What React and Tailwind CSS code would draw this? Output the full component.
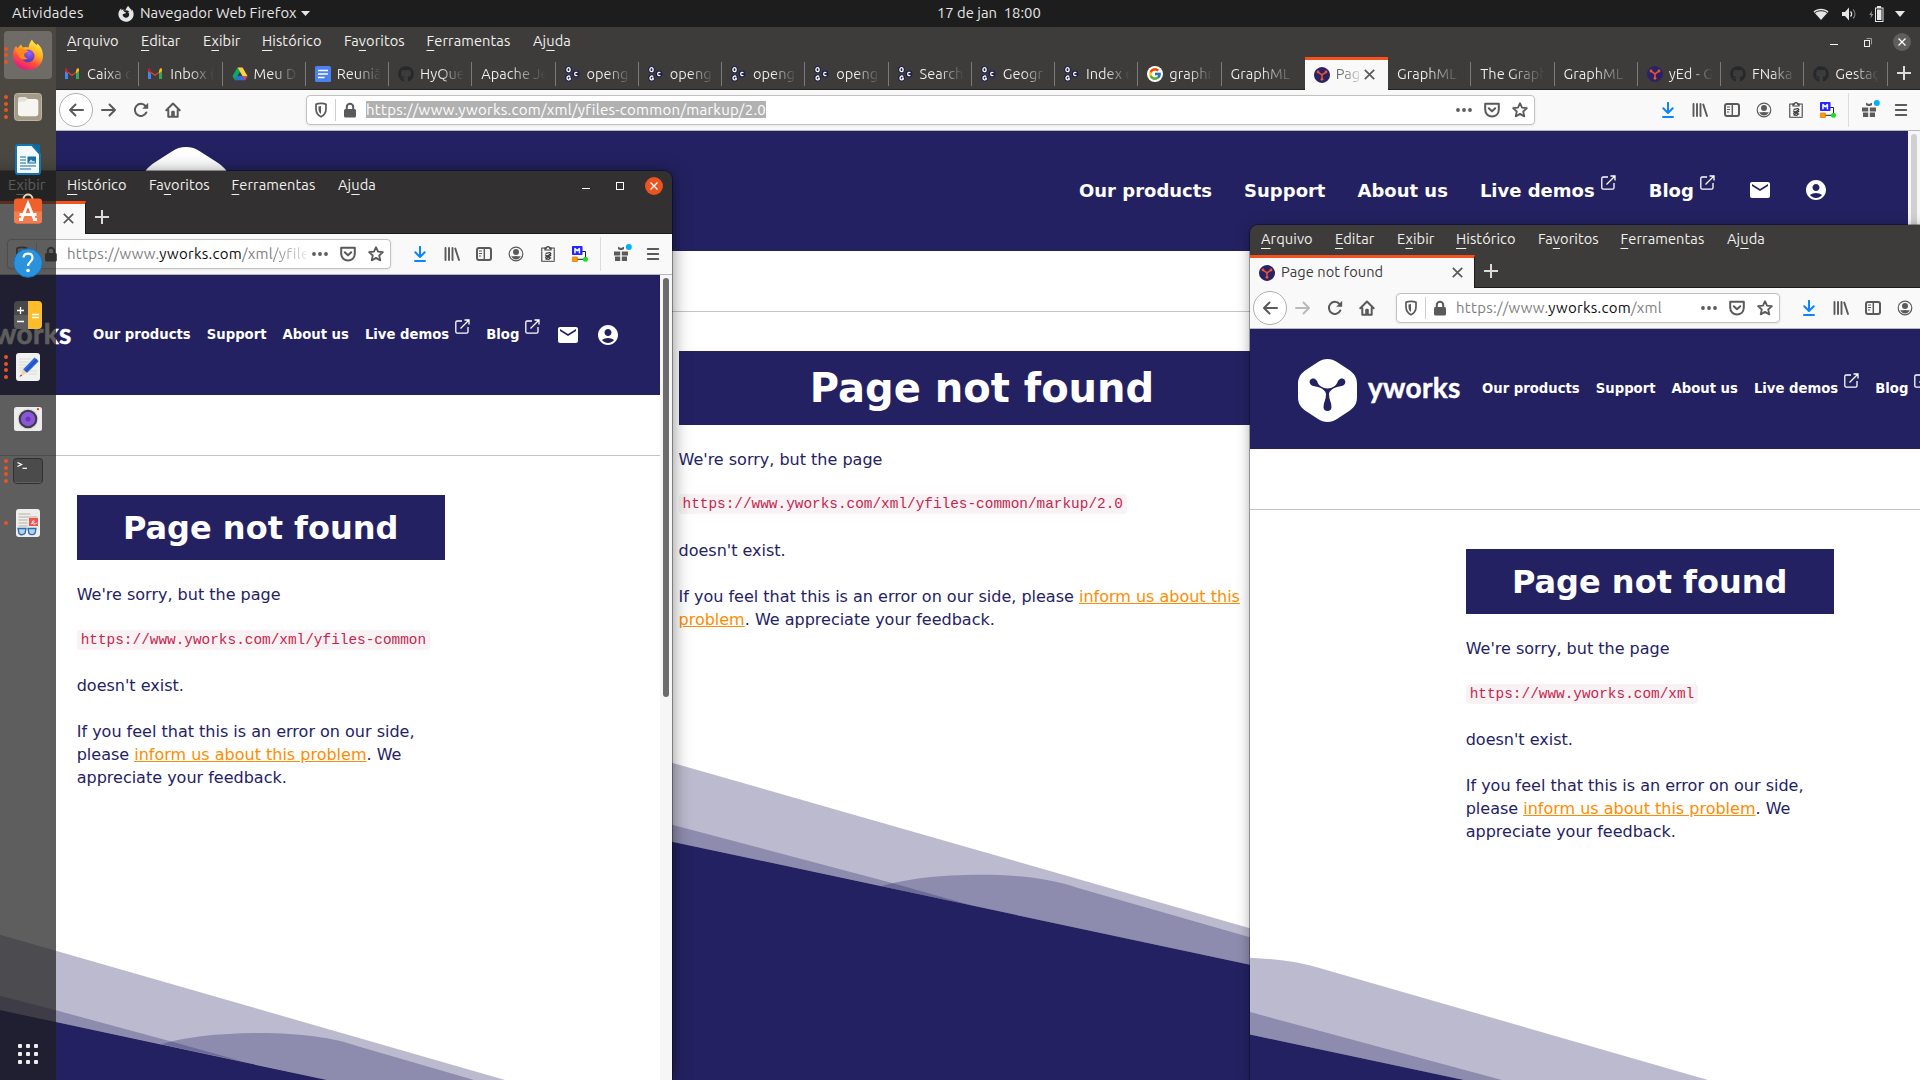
import React from "react";
import { FaGithub, FaFirefoxBrowser } from "react-icons/fa";
import { FcGoogle } from "react-icons/fc";
import { MdEmail, MdAccountCircle } from "react-icons/md";

const ui = "font-['Ubuntu','Noto_Sans',sans-serif]";

/* ---------- favicons ---------- */

function Gmail() {
  return (
    <svg width="16" height="16" viewBox="0 0 16 16" className="-ml-px">
      <path d="M1 3.500v9.500h3V7l4 3 4-3v6h3V3.500L8 8.600z" fill="#ea4335" />
      <path d="M1 5v8h3V7.200z" fill="#4285f4" />
      <path d="M15 5v8h-3V7.200z" fill="#34a853" />
      <path d="M12 4.700V7.200l3-2.200V3.600c0-1.100-1.200-1.600-2-1z" fill="#fbbc04" />
      <path d="M4 4.700V7.200L1 5V3.600c0-1.100 1.200-1.600 2-1z" fill="#c5221f" />
    </svg>
  );
}
function Drive() {
  return (
    <svg width="16" height="16" viewBox="0 0 16 16">
      <path d="M5.500 1.500L.5 10l2.400 4.200L8 5.700z" fill="#0da960" />
      <path d="M5.500 1.500h5L15.500 10h-5z" fill="#ffcf48" />
      <path d="M2.900 14.300L5.400 10h10.100l-2.500 4.300z" fill="#2d6fdd" />
      <path d="M10.600 10h4.900l-2.500 4.300z" fill="#ea4335" />
    </svg>
  );
}
function Docs() {
  return (
    <svg width="16" height="16" viewBox="0 0 16 16">
      <rect width="16" height="16" rx="1.500" fill="#4d80f0" />
      <path d="M3 4.500h10M3 8h10M3 11.500h6.500" stroke="#fff" strokeWidth="1.700" />
    </svg>
  );
}
function Ogc() {
  return (
    <svg width="16" height="16" viewBox="0 0 16 16" className="-ml-px">
      <g fill="#1d1f4d">
        <circle cx="4.500" cy="3.700" r="3.400" />
        <circle cx="4.500" cy="12" r="3.400" />
        <circle cx="12" cy="8" r="3.400" />
      </g>
      <g fill="none" stroke="#fff" strokeWidth="1.300">
        <ellipse cx="4.500" cy="3.700" rx="1.600" ry="2" />
        <path d="M6.200 10.600c-1-1-3.200-.8-3.200 1.400s2.300 2.300 3.200 1.400v-1.300h-1.400M13.400 6.900c-.9-.9-2.700-.6-2.700 1.100s1.800 2 2.700 1.100" />
      </g>
    </svg>
  );
}
function GoogleIcon() {
  return (
    <span className="flex size-4 items-center justify-center rounded-full bg-white">
      <FcGoogle size={14} />
    </span>
  );
}
function YTab() {
  return (
    <svg width="16" height="16" viewBox="0 0 16 16" className="shrink-0">
      <path d="M8 0c3 0 8 2.800 8 8s-5 8-8 8-8-2.800-8-8 5-8 8-8z" fill="#2a2266" />
      <path d="M4 5.200L8 7.800l4-2.600M8 7.800V13" stroke="#f0542a" strokeWidth="1.500" fill="none" />
      <circle cx="4" cy="5" r="1.400" fill="#f0542a" />
      <circle cx="12" cy="5" r="1.400" fill="#f0542a" />
      <circle cx="8" cy="12.300" r="1.400" fill="#f0542a" />
    </svg>
  );
}
function Hub() {
  return <FaGithub size={16} color="#24292e" />;
}

/* ---------- browser chrome icons ---------- */

function Ico({ children, size = 16, color = "#5a5a5b", className = "" }) {
  return (
    <svg
      width={size}
      height={size}
      viewBox="0 0 16 16"
      fill="none"
      stroke={color}
      strokeWidth="2"
      strokeLinecap="round"
      strokeLinejoin="round"
      className={"shrink-0 " + className}
    >
      {children}
    </svg>
  );
}
const Back = () => (
  <Ico><path d="M15 8H2M7.500 2.500L2 8l5.500 5.500" /></Ico>
);
const Forward = ({ color }) => (
  <Ico color={color}><path d="M1 8h13M8.500 2.500L14 8l-5.500 5.500" /></Ico>
);
const Reload = () => (
  <Ico>
    <path d="M13.300 10.500A6 6 0 1 1 12.500 4" />
    <path d="M15.200.8v6H9.200z" fill="#5a5a5b" stroke="none" />
  </Ico>
);
const Home = () => (
  <Ico>
    <path d="M1.300 8.300L8 1.500l6.700 6.800M3.300 8v6.700h9.400V8" />
    <path d="M6.200 15V10.200c0-1 .6-1.400 1.800-1.400s1.800.4 1.800 1.400V15z" fill="#5a5a5b" stroke="none" />
  </Ico>
);
const Shield = () => (
  <Ico>
    <path d="M8 1.300c2 0 4 .4 5 1v4.500c0 4-2 6.500-5 8-3-1.500-5-4-5-8V2.300c1-.6 3-1 5-1z" strokeWidth="1.700" />
    <path d="M8 4v8C6.300 10.800 5.500 9 5.500 6.900V4.500z" fill="#5a5a5b" stroke="none" />
  </Ico>
);
const Lock = () => (
  <Ico>
    <rect x="2" y="7" width="12" height="8.500" rx="1.500" fill="#5a5a5b" stroke="none" />
    <path d="M4.800 7.500V5a3.200 3.200 0 0 1 6.400 0v2.500" />
  </Ico>
);
const Dots = () => (
  <Ico>
    <g fill="#5a5a5b" stroke="none">
      <circle cx="2" cy="8" r="1.900" />
      <circle cx="8" cy="8" r="1.900" />
      <circle cx="14" cy="8" r="1.900" />
    </g>
  </Ico>
);
const Pocket = () => (
  <Ico>
    <path d="M1.200 1.800h13.600v5.700c0 9.200-13.600 9.200-13.600 0z" />
    <path d="M4.800 6.300L8 9.300l3.200-3" />
  </Ico>
);
const Star = () => (
  <Ico>
    <path d="M8 1.200l2 4.500 4.900.5-3.700 3.300 1.100 4.900L8 11.900l-4.300 2.500 1.100-4.900L1.100 6.200 6 5.700z" strokeWidth="1.800" />
  </Ico>
);
const Download = () => (
  <Ico color="#0a84ff">
    <path d="M8 .8v9.700M3.300 6.300L8 11l4.700-4.700M3 15h10" />
  </Ico>
);
const Library = () => (
  <Ico>
    <path d="M1.500 2v12M5 2v12M8.500 2v12M11.300 2.600l3.700 11.400" strokeWidth="1.900" />
  </Ico>
);
const Sidebar = () => (
  <Ico>
    <rect x="1" y="2" width="14" height="12" rx="2" />
    <path d="M8.300 2v12" strokeWidth="1.500" />
    <path d="M3.300 5h2.400M3.300 7.500h2.400M3.300 10h1.500" strokeWidth="1" />
  </Ico>
);
const Account = () => (
  <Ico>
    <circle cx="8" cy="8" r="6.800" strokeWidth="1.200" />
    <circle cx="8" cy="6" r="3" fill="#5a5a5b" stroke="none" />
    <path d="M3.200 9.800c1.200 1 3 .2 4.800.2s3.600.8 4.800-.2c-.6 2.300-2.600 3.700-4.800 3.700s-4.200-1.400-4.800-3.700z" fill="#5a5a5b" stroke="none" />
  </Ico>
);
const Clipboard = () => (
  <Ico color="#3a3a3b">
    <rect x="1.800" y="2" width="12.400" height="13.300" strokeWidth="1.100" strokeDasharray="1.500 .8" />
    <path d="M5 4h6V2.200H9.500a1.500 1.500 0 0 0-3 0H5z" strokeWidth="1.200" fill="#fff" />
    <path d="M6 7.300l4-.8.800 1.200-5.300 3.600M10.800 9.300l-5 3.700 3 .3 2-1.500M5.500 9l3.800 2.600" strokeWidth="1.200" />
  </Ico>
);
const MarkIcon = () => (
  <Ico className="overflow-visible">
    <rect x="0" y="0" width="10.500" height="9" rx=".8" fill="#2424ff" stroke="none" />
    <path d="M3 6.800V2.600l2.200 2.200 2.200-2.200v4.200" stroke="#fff" strokeWidth="1.500" />
    <path d="M10.500 5.500h3v7.500M4 13.300h9" stroke="#222" strokeWidth="1" />
    <rect x=".8" y="11" width="4.500" height="4.500" fill="#ff9a00" stroke="#e07800" strokeWidth=".8" />
    <circle cx="13.500" cy="13.300" r="2.500" fill="#17e31b" stroke="none" />
  </Ico>
);
const Gift = () => (
  <Ico className="overflow-visible">
    <g fill="#5a5a5b" stroke="none">
      <path d="M1 5.500h6.200v4H1zM8.800 5.500H15v4H8.800zM2 10.500h5.200V15H2zM8.800 10.500H14V15H8.800z" />
      <path d="M5 .8l3 1.200 3-1.200v2.500L8 4.200 5 3.300z" />
    </g>
    <circle cx="15.800" cy="1" r="3" fill="#00b3f4" stroke="none" />
  </Ico>
);
const Burger = () => (
  <Ico><path d="M2.800 3h10.400M2.800 8h10.400M2.800 13h10.400" /></Ico>
);
const Plus = () => (
  <svg width="14" height="14" viewBox="0 0 14 14" className="shrink-0">
    <path d="M7 0v14M0 7h14" stroke="#dcdcdc" strokeWidth="2" />
  </svg>
);
const TabClose = () => (
  <svg width="11" height="11" viewBox="0 0 11 11" className="-mt-0.5 shrink-0">
    <path d="M.8.8l9.400 9.400M10.200.8L.8 10.200" stroke="#5a5a5a" strokeWidth="1.700" />
  </svg>
);
const External = () => (
  <svg width="15" height="15" viewBox="0 0 15 15" fill="none" stroke="#fff" strokeWidth="1.300" className="shrink-0 -translate-y-[8px]">
    <path d="M7 2H2.200C1.400 2 .8 2.600.8 3.400v9.400c0 .8.6 1.400 1.400 1.400h9.400c.8 0 1.400-.6 1.400-1.400V8M5.500 9.500L14 1M9.500 1H14v4.500" />
  </svg>
);

const Cell = ({ children, w = "w-8" }) => (
  <span className={"flex shrink-0 items-center justify-center " + w}>{children}</span>
);

/* ---------- window chrome ---------- */

const menus = [
  ["", "A", "rquivo", "w-[74px]"],
  ["", "E", "ditar", "w-[62px]"],
  ["E", "x", "ibir", "w-[59px]"],
  ["", "H", "istórico", "w-[82px]"],
  ["Fa", "v", "oritos", "w-[82.500px]"],
  ["", "F", "erramentas", "w-[106.500px]"],
  ["Aj", "u", "da", "w-[60px]"],
];

function MenuBar({ controls, dark }) {
  return (
    <div className={"flex h-[30px] shrink-0 items-center pl-[11px] text-[14.600px] tracking-[0.100px] text-[#f0f0ee] " + ui}>
      {menus.map(([a, u, b, w]) => (
        <span key={u + b} className={"-mt-0.5 shrink-0 whitespace-nowrap " + w}>
          {a}
          <span className="underline decoration-1 underline-offset-4">{u}</span>
          {b}
        </span>
      ))}
      {controls && (
        <span className="ml-auto flex items-center pr-[9px]">
          <span className="mt-1 h-px w-2 bg-white" />
          <span className="ml-[22px] flex h-[14px] w-[16px] items-center justify-center">
            {dark ? (
              <span className="size-2 border border-white" />
            ) : (
              <svg width="8" height="9" viewBox="0 0 8 9" fill="none" stroke="#eee">
                <rect x=".5" y="2.500" width="5" height="6" />
                <path d="M2.500.5h5v6" stroke="#999" />
              </svg>
            )}
          </span>
          <span className={"ml-[17px] flex size-[18px] items-center justify-center rounded-full " + (dark ? "bg-[#e95420]" : "bg-[#5f5e5c]")}>
            <svg width="8" height="8" viewBox="0 0 8 8" stroke="#fff" strokeWidth="1.300">
              <path d="M.5.5l7 7M7.500.5l-7 7" />
            </svg>
          </span>
        </span>
      )}
    </div>
  );
}

const tabs = [
  [Gmail, "Caixa d"],
  [Gmail, "Inbox ("],
  [Drive, "Meu D"],
  [Docs, "Reuniã"],
  [Hub, "HyQue"],
  [null, "Apache Je"],
  [Ogc, "openg"],
  [Ogc, "openg"],
  [Ogc, "openg"],
  [Ogc, "openg"],
  [Ogc, "Search"],
  [Ogc, "Geogr"],
  [Ogc, "Index o"],
  [GoogleIcon, "graphn"],
  [null, "GraphML"],
  [YTab, "Pag", true],
  [null, "GraphML"],
  [null, "The Graph"],
  [null, "GraphML"],
  [YTab, "yEd - G"],
  [Hub, "FNaka"],
  [Hub, "Gestaç"],
];

function Tab({ Icon, label, active, last }) {
  if (active)
    return (
      <div className="flex h-[33px] w-[83.250px] shrink-0 items-center border-t-[3px] border-[#f4511e] bg-[#f9f9fa] pl-[9px]">
        <Icon />
        <span className="-mt-0.5 ml-[6px] w-[28px] overflow-hidden whitespace-nowrap bg-linear-to-r from-[#666] from-20% to-[#e4e4e4] to-90% bg-clip-text text-transparent">{label}</span>
        <TabClose />
      </div>
    );
  return (
    <div className="flex h-[33px] w-[83.250px] shrink-0 items-center pl-[9px] text-[#f0f0ee]">
      {Icon && <span className="w-[22px] shrink-0"><Icon /></span>}
      <span className={(Icon ? "w-[44px]" : "w-[65px]") + " overflow-hidden whitespace-nowrap bg-linear-to-r from-[#f0f0ee] from-45% to-[#3e3c3a] bg-clip-text text-transparent"}>
        {label}
      </span>
      {!last && <span className="mt-px ml-auto h-6 w-px bg-[#7c7b79]" />}
    </div>
  );
}

function MainTabs() {
  return (
    <div className={"flex h-[33px] shrink-0 border-b border-[#242322] text-[14.600px] " + ui}>
      {tabs.map(([Icon, label, active], i) => (
        <Tab key={i} Icon={Icon} label={label} active={active} last={i === 14} />
      ))}
      <span className="flex w-[32px] items-center justify-center"><Plus /></span>
    </div>
  );
}
function SingleTab() {
  return (
    <div className={"flex h-[33px] shrink-0 border-b border-[#1c1b1b] text-[14.600px] tracking-[0.080px] " + ui}>
      <div className="-mb-px flex w-[225px] items-center border-t-[3px] border-r border-t-[#f4511e] border-r-[#1c1b1b] bg-[#f9f9fa] pl-[9px] text-[#3b3b3c]">
        <YTab />
        <span className="-mt-0.5 grow pl-[6px]">Page not found</span>
        <span className="mr-[11.500px] flex"><TabClose /></span>
      </div>
      <span className="flex w-[32px] items-center justify-center"><Plus /></span>
    </div>
  );
}

function Toolbar({ main, url }) {
  return (
    <div className={"flex h-[41px] shrink-0 items-center border-b border-[#b8b8b9] bg-[#f9f9fa] px-[3px] " + ui}>
      <span className="flex size-[34px] shrink-0 items-center justify-center rounded-full border border-[#b0b0b1] bg-white"><Back /></span>
      <Cell><Forward color={main ? "#5a5a5b" : "#b9b9ba"} /></Cell>
      <Cell><Reload /></Cell>
      <Cell><Home /></Cell>
      <div className={"flex h-[30px] min-w-0 grow items-center rounded-[4px] border border-[#c1c1c2] bg-white shadow-[0_1px_3px_rgba(0,0,0,0.08)] " + (main ? "mr-[117.500px] ml-[117px]" : "mr-[13.500px] ml-[13px]")}>
        <Cell w="w-[28px]"><Shield /></Cell>
        <span className="h-[22px] w-px shrink-0 bg-[#cfcfd0]" />
        <Cell w="w-[27px]"><Lock /></Cell>
        <span className="mt-px ml-[3px] min-w-0 grow overflow-hidden text-[15px] tracking-[0.270px] whitespace-nowrap">
          {main ? (
            <span className="bg-[#b1b1b1] text-white">{url.host[0] + url.host[1] + url.path}</span>
          ) : (
            <span className="text-[#808080]">
              {url.host[0]}
              <span className="text-[#0c0c0d]">{url.host[1]}</span>
              {url.fade ? (
                <>
                  /xml<span className="bg-linear-to-r from-[#808080] to-white to-[40px] bg-clip-text text-transparent">{url.fade}</span>
                </>
              ) : (
                url.path
              )}
            </span>
          )}
        </span>
        <Cell w="w-[28px]"><Dots /></Cell>
        <Cell w="w-[28px]"><Pocket /></Cell>
        <Cell w="w-[28px]"><Star /></Cell>
      </div>
      <Cell><Download /></Cell>
      <Cell><Library /></Cell>
      <Cell><Sidebar /></Cell>
      <Cell><Account /></Cell>
      <Cell><Clipboard /></Cell>
      <Cell><MarkIcon /></Cell>
      <span className="mx-1 h-[34px] w-px shrink-0 bg-[#dcdcdd]" />
      <Cell><Gift /></Cell>
      <Cell><Burger /></Cell>
    </div>
  );
}

/* ---------- web page ---------- */

function YLogo({ className }) {
  return (
    <svg viewBox="0 0 59 63" preserveAspectRatio="none" className={className}>
      <path d="M29.500 0C33 0 36 1 39 3L50 10.200C56.500 14.500 59 18.500 59 25v13c0 6.500-2.500 10.500-9 14.800L39 60c-3 2-6 3-9.500 3s-6.500-1-9.500-3L9 52.800C2.500 48.500 0 44.500 0 38V25c0-6.500 2.500-10.500 9-14.800L20 3c3-2 6-3 9.500-3z" fill="#fff" />
      <path d="M12 24.500c-1.500-3.500 2-6 5-4.500 3 1.500 2 5 6 7.500 2 1.300 4 2 6.500 2s4.500-.7 6.500-2c4-2.500 3-6 6-7.500s6.500 1 5 4.500c-1.500 3.300-5 2.500-8 3.500-3.500 1.200-8 3.500-8 7.500 0 5 2.500 8 2.500 12.500 0 2.500-1.700 4-4 4s-4-1.500-4-4c0-4.500 2.500-7.500 2.500-12.500 0-4-4.500-6.300-8-7.500-3-1-6.500-.2-8-3.500z" fill="#242162" />
    </svg>
  );
}

function SiteHeader({ main }) {
  const gap = main ? "gap-8" : "gap-4";
  return (
    <div className="flex h-[120px] shrink-0 items-center bg-[#242162] pl-12 font-['DejaVu_Sans',sans-serif] font-bold text-white">
      {main ? (
        <YLogo className="mt-1 ml-[38px] h-[92px] w-[88px] shrink-0" />
      ) : (
        <>
          <YLogo className="mt-0.5 h-[63px] w-[59px] shrink-0" />
          <span className="-mt-1 ml-[11px] w-[92px] shrink-0 font-['Lato',sans-serif] text-[28px] leading-none tracking-[0.300px] [-webkit-text-stroke:0.500px_white]">yworks</span>
        </>
      )}
      <div className={"flex shrink-0 items-center whitespace-nowrap " + gap + (main ? " -mt-0.5 ml-[849px] text-[18px]" : " ml-[22px] text-[13.220px]")}>
        <span>Our products</span>
        <span>Support</span>
        <span>About us</span>
        <span className="flex items-center"><span className="mr-[6px]">Live demos</span><External /></span>
        <span className={"flex items-center " + (main ? "ml-px" : "")}><span className="mr-[6px]">Blog</span><External /></span>
        <span className={main ? "ml-px" : ""}><MdEmail size={24} /></span>
        <span><MdAccountCircle size={24} /></span>
      </div>
    </div>
  );
}

function NotFound({ main, url }) {
  return (
    <div className={"font-['DejaVu_Sans',sans-serif] text-[16px] leading-[22.860px] text-[#242265] " + (main ? "ml-[622.500px] w-[607px]" : "ml-[215.700px] w-[368px]")}>
      <h1 className={"mt-[39px] flex items-center justify-center bg-[#242162] font-bold text-white " + (main ? "h-[74px] text-[40px]" : "h-[65px] pt-0.5 text-[32px]")}>
        Page not found
      </h1>
      <p className="mt-[23.800px]">We're sorry, but the page</p>
      <p className={main ? "mt-[20px]" : "mt-[20.900px]"}>
        <code className="rounded bg-[#f9f2f4] px-1 py-0.5 font-['Liberation_Mono',monospace] text-[14.400px] whitespace-nowrap text-[#c7254e]">{url}</code>
      </p>
      <p className={main ? "mt-[24.800px]" : "mt-[23.900px]"}>doesn't exist.</p>
      <p className="mt-[22.860px] whitespace-nowrap">
        {main ? (
          <>
            If you feel that this is an error on our side, please <span className="text-[#ff8c00] underline">inform us about this<br />problem</span>. We appreciate your feedback.
          </>
        ) : (
          <>
            If you feel that this is an error on our side,<br />
            please <span className="text-[#ff8c00] underline">inform us about this problem</span>. We<br />
            appreciate your feedback.
          </>
        )}
      </p>
    </div>
  );
}

function Browser({ main, dark, controls, url, thumb, wave, className }) {
  return (
    <div className={"flex flex-col overflow-hidden " + (dark ? "bg-[#323030] " : "bg-[#3e3c3a] ") + className}>
      <MenuBar controls={controls} dark={dark} />
      {main ? <MainTabs /> : <SingleTab />}
      <Toolbar main={main} url={url} />
      <div className="flex min-h-0 grow bg-white">
        <div className="relative min-w-0 grow overflow-hidden">
          {wave}
          <div className="relative">
            <SiteHeader main={main} />
            <div className="h-[61px] border-b border-[#c4c4c4]" />
            <NotFound main={main} url={url.host.join("") + url.path} />
          </div>
        </div>
        <div className="w-3 shrink-0 bg-[#f6f6f7] pt-[3px]">
          <div className={"mx-auto w-1.5 rounded-full " + thumb} />
        </div>
      </div>
    </div>
  );
}

/* Wave footers are drawn in desktop coordinates, clipped to their window. */
function Wave({ box, className, light, mid, hump, navy }) {
  return (
    <svg viewBox={box} className={"absolute bottom-0 left-0 " + className}>
      <g fill="#242162">
        <path d={light} opacity=".31" />
        <path d={mid} opacity=".3" />
        {hump && <path d={hump} opacity=".3" />}
        <path d={navy} />
      </g>
    </svg>
  );
}

/* ---------- dock ---------- */

function DockItem({ dots = 0, active, children }) {
  return (
    <div className="relative flex h-[52px] w-14 items-center justify-center">
      {active && <span className="absolute inset-x-1 inset-y-0.5 rounded bg-white/20" />}
      <span className="absolute left-1 flex flex-col gap-[2.500px]">
        {Array.from({ length: dots }, (_, i) => (
          <span key={i} className="size-1 rounded-full bg-[#e95420]" />
        ))}
      </span>
      <svg width="32" height="32" viewBox="0 0 32 32" className="relative overflow-visible">{children}</svg>
    </div>
  );
}

function Dock() {
  return (
    <div className="absolute top-[27px] left-0 flex h-[1053px] w-14 flex-col bg-[rgba(30,30,30,0.717)] pt-0.5">
      <DockItem dots={3} active>
        <defs>
          <linearGradient id="fx" x1=".8" y1="0" x2=".3" y2="1">
            <stop offset="0" stopColor="#fff44f" />
            <stop offset=".4" stopColor="#ffb01e" />
            <stop offset=".7" stopColor="#ff4a3d" />
            <stop offset="1" stopColor="#e0158a" />
          </linearGradient>
          <radialGradient id="globe" cx=".6" cy=".3">
            <stop offset="0" stopColor="#a05cff" />
            <stop offset="1" stopColor="#5b3fc4" />
          </radialGradient>
        </defs>
        <path d="M20 .5c1 2.500 2.800 4 4.500 5.500l1-1.200C29.500 8 31 12.500 31 17c0 8-6.500 14-15 14S1 25 1 17c0-4 1-7.500 3-10l1.500 2.300L9 5.500l1.800 3C13 7.600 15 7.800 16.500 8.500 17 5 18.500 2.500 20 .5z" fill="url(#fx)" />
        <circle cx="16" cy="17" r="6.500" fill="url(#globe)" />
        <path d="M4 11c3-2.500 7-2 9 0 1.500 0 3 .5 3.500 1.500-1 1-3 1-4 2.500-1 1.500.5 4 3.500 4.500-3 2-7 1-9-2C5.500 15 5 13 4 11z" fill="#ff8a1c" />
      </DockItem>
      <DockItem dots={4}>
        <rect x="2.500" y="2.500" width="27" height="27" rx="3" fill="#a49a88" stroke="#bdb4a3" />
        <path d="M6 9c0-1.700.8-2.700 2.500-2.700h4.500c1.500 0 1.500 1.700 3.500 1.700h7c1.800 0 2.800 1 2.800 2.800v11.700c0 1.800-1 2.700-2.800 2.700h-14C7 25.200 6 24.200 6 22.500z" fill="#f7f5f2" />
        <path d="M6 9.500c0-2 .8-3.200 2.500-3.200h4.500c1.500 0 1.500 1.700 3.500 1.700-2 0-2 2.500-4 2.500H9c-2 0-3 .6-3 2z" fill="#e4dfd6" />
      </DockItem>
      <DockItem>
        <path d="M6 2h14l8 9v18a2 2 0 0 1-2 2H6a2 2 0 0 1-2-2V4a2 2 0 0 1 2-2z" fill="#f4f9fc" stroke="#0f77b3" strokeWidth="2" />
        <path d="M21 1.500h7V10z" fill="#0d6aa0" />
        <path d="M8 14h6M8 17h6M8 20h6M8 23h16M8 26h11" stroke="#0f6ea3" strokeWidth="1.200" />
        <rect x="15.500" y="13.500" width="8.500" height="7" fill="#1d6f9f" />
        <path d="M16.500 19.500l2.500-3 2 2 1-1 1.500 2z" fill="#bfe3f5" />
      </DockItem>
      <DockItem>
        <path d="M11.500 4c0-6 9-6 9 0" fill="none" stroke="#e3d5b2" strokeWidth="2" />
        <rect x="2" y="3.500" width="28" height="25" rx="3" fill="#f0602c" />
        <path d="M2 16.500h28v9a3 3 0 0 1-3 3H5a3 3 0 0 1-3-3z" fill="#f47d50" />
        <path d="M9.500 24.500L16 8.500l6.500 16M7.500 19.500h17M7 24.500h4M21 24.500h4" stroke="#fff" strokeWidth="2.800" fill="none" />
      </DockItem>
      <DockItem>
        <circle cx="16" cy="16" r="14.300" fill="#2b93dd" stroke="#1a6fb0" />
        <path d="M11.500 10.500c.5-5 9-5.500 9 .5 0 3.500-4.500 4-4.500 8" fill="none" stroke="#fff" strokeWidth="2.200" />
        <circle cx="16" cy="23.500" r="1.800" fill="#fff" />
      </DockItem>
      <DockItem>
        <rect x="2" y="2" width="28" height="28" rx="4" fill="#484848" />
        <path d="M2 16h14v14H6a4 4 0 0 1-4-4z" fill="#5c5c5c" />
        <path d="M16 2h10a4 4 0 0 1 4 4v20a4 4 0 0 1-4 4H16z" fill="#fdbc2c" />
        <path d="M5 11.500h7M8.500 8v7M5 22.500h7M20 15.500h7M20 18.500h7" stroke="#fff" strokeWidth="1.300" />
      </DockItem>
      <DockItem dots={4}>
        <rect x="4" y="2" width="24" height="28" rx="3" fill="#f1f1f0" />
        <path d="M7 8h12M7 11h9M7 14h7M7 17h6M17 23h8M7 20h5M18 20h7" stroke="#d4d4d2" strokeWidth=".8" />
        <path d="M11 18.500L22.500 6.500l4.200 3.800L15 22z" fill="#2f67dd" />
        <path d="M13.500 20.500l11.500-12" stroke="#1f4fb5" strokeWidth="1.500" />
        <path d="M11 18.500l4 3.500-7 3.500z" fill="#f3d2a8" />
        <path d="M9 23.500l1 1.200-2.500 1z" fill="#333" />
      </DockItem>
      <DockItem>
        <rect x="2" y="4" width="28" height="24" rx="2.500" fill="#ececec" />
        <circle cx="16" cy="16" r="10.500" fill="#dcdcdc" />
        <circle cx="16" cy="16" r="9.300" fill="#3b3b45" />
        <circle cx="16" cy="16" r="7.200" fill="#8a57d8" />
        <circle cx="16" cy="16" r="2.500" fill="#6c35b8" />
        <circle cx="26" cy="6.200" r="1.100" fill="#d9352b" />
      </DockItem>
      <DockItem dots={4}>
        <rect x="1.500" y="3.500" width="29" height="25" rx="3" fill="#4b4b4b" stroke="#2f2f2f" />
        <path d="M2.500 27.500h27" stroke="#666" strokeWidth=".8" />
        <path d="M5.500 7.500l4 2-4 2" stroke="#fff" strokeWidth="1.300" fill="none" />
        <path d="M10.500 13.300h4.500" stroke="#fff" strokeWidth="1.200" />
      </DockItem>
      <DockItem dots={1}>
        <rect x="4" y="2" width="24" height="28" rx="3" fill="#eeeeed" />
        <path d="M6.500 7h12M6.500 10h19M6.500 13h9M6.500 16h9M6.500 19h9" stroke="#b8b0a0" strokeWidth="1" />
        <rect x="17" y="11" width="9" height="8" fill="#f4524a" />
        <path d="M19 16.500c2 1 4-3 2.500-3s-2 3.500.5 3.500 2-1 3.500-1" stroke="#fff" strokeWidth=".9" fill="none" />
        <path d="M6 21.500h8l-1 5c-2 1.500-4.500 1.500-6 0zM16 21.500h8l-1 5c-1.500 1.500-4.500 1.500-6 0z" fill="#b9cfe3" stroke="#2b6cb0" strokeWidth="1.300" />
      </DockItem>
      <div className="mt-auto mb-4 grid w-5 grid-cols-3 gap-1 self-center">
        {Array.from({ length: 9 }, (_, i) => (
          <span key={i} className="size-1 rounded-[1px] bg-[#eee]" />
        ))}
      </div>
    </div>
  );
}

function TopBar() {
  return (
    <div className={"absolute inset-x-0 top-0 flex h-[27px] items-center bg-[#1d1d1d] text-[14.800px] text-[#e6e6e6] " + ui}>
      <span className="w-[105px] pl-3 tracking-[0.220px]">Atividades</span>
      <span className="flex grow items-center pl-[13px]">
        <FaFirefoxBrowser size={16} color="#e6e6e6" />
        <span className="ml-[6px]">Navegador Web Firefox</span>
        <svg width="9" height="5" className="ml-[5px]"><path d="M0 0h9L4.500 5z" fill="#e6e6e6" /></svg>
      </span>
      <span className="absolute left-[937px] whitespace-pre">17 de jan  18:00</span>
      <span className="flex items-center pr-[15px]">
        <svg width="16" height="14" viewBox="0 0 16 14">
          <path d="M8 13L.5 4.500C4.500.7 11.500.7 15.500 4.500z" fill="#e6e6e6" />
          <path d="M1.800 5.700c3.500-2.600 8.900-2.600 12.400 0" stroke="#1d1d1d" strokeWidth="1" fill="none" />
        </svg>
        <svg width="16" height="14" viewBox="0 0 16 14" className="ml-[12px]">
          <path d="M1 5h3l4-4.500v13L4 9H1z" fill="#e6e6e6" />
          <path d="M9.500 4.500c1.500 1.300 1.500 3.700 0 5" stroke="#e6e6e6" strokeWidth="1.300" fill="none" />
          <path d="M12 2.500c2.700 2.500 2.700 6.500 0 9" stroke="#777" strokeWidth="1.200" fill="none" />
        </svg>
        <svg width="15" height="16" viewBox="0 0 15 16" className="ml-[12px]">
          <path d="M3 4.500L.3 9h1.900l-.7 3.500L4.300 8H2.500z" fill="#999" />
          <path d="M8 0h4v1.500h2.500V16H6V1.500h2z" fill="#e6e6e6" />
          <path d="M7 2.500h6.500V15H7z" fill="#1d1d1d" />
          <path d="M8 3.500h4.500V14H8z" fill="#e6e6e6" />
        </svg>
        <svg width="10" height="6" className="ml-[11px]"><path d="M0 0h10L5 6z" fill="#e6e6e6" /></svg>
      </span>
    </div>
  );
}

const host = ["https://www.", "yworks.com"];

export default function App() {
  return (
    <div className="relative h-[1080px] w-[1920px] overflow-hidden bg-[#bbb09b]">
      <Browser
        main
        controls
        url={{ host, path: "/xml/yfiles-common/markup/2.0" }}
        thumb="h-[400px] bg-[#d0d0d1]"
        className="absolute top-[27px] left-14 h-[1053px] w-[1864px]"
        wave={
          <Wave
            box="56 680 1852 400"
            className="h-[400px] w-[1852px]"
            light="M56 586L672 762.700L1250 928.300L1780 1080H56z"
            mid="M56 660L672 824.700L893 883.300L972 905.500L900 890L672 841.700L56 710z"
            hump="M881 886.200C905 879 940 874.700 980 874.700C1020 874.700 1052 879 1078 888L1250 937.300L1750 1080L1250 964.700z"
            navy="M56 710.500L672 841.700L1250 964.700L1790 1080H56z"
          />
        }
      />
      <Browser
        dark
        controls
        url={{ host, path: "/xml/yfiles-common", fade: "/yfile" }}
        thumb="h-[419px] bg-[#6b6b6c]"
        className="absolute top-[171px] -left-[139px] h-[909px] w-[811px] rounded-t-lg shadow-[0_2px_18px_rgba(0,0,0,0.5),0_0_0_1px_rgba(0,0,0,0.35)]"
        wave={
          <Wave
            box="-139 780 799 300"
            className="h-[300px] w-[799px]"
            light="M-139 895L0 934.700L505 1080H-139z"
            mid="M-139 958L0 995.700L56 1010.300L170.400 1041.300L243 1061.500L56 1022L0 1010L-139 980z"
            hump="M161 1044.200C185 1037 220 1033 260 1033C300 1033 335 1038 357 1046L474 1080H327z"
            navy="M-139 980L0 1010L56 1022L327 1080H-139z"
          />
        }
      />
      <Browser
        url={{ host, path: "/xml" }}
        thumb="h-[400px] bg-[#d0d0d1]"
        className="absolute top-[225px] left-[1250px] h-[855px] w-[811px] rounded-t-lg shadow-[0_2px_13px_rgba(0,0,0,0.35),0_0_0_1px_rgba(0,0,0,0.3)]"
        wave={
          <Wave
            box="1250 780 799 300"
            className="h-[300px] w-[799px]"
            light="M1250 957.700C1276 959 1300 962 1322 968.700L1708 1080H1250z"
            mid="M1250 1012L1502 1080H1464L1250 1034.500z"
            navy="M1250 1034.500L1464 1080H1250z"
          />
        }
      />
      <Dock />
      <TopBar />
    </div>
  );
}
